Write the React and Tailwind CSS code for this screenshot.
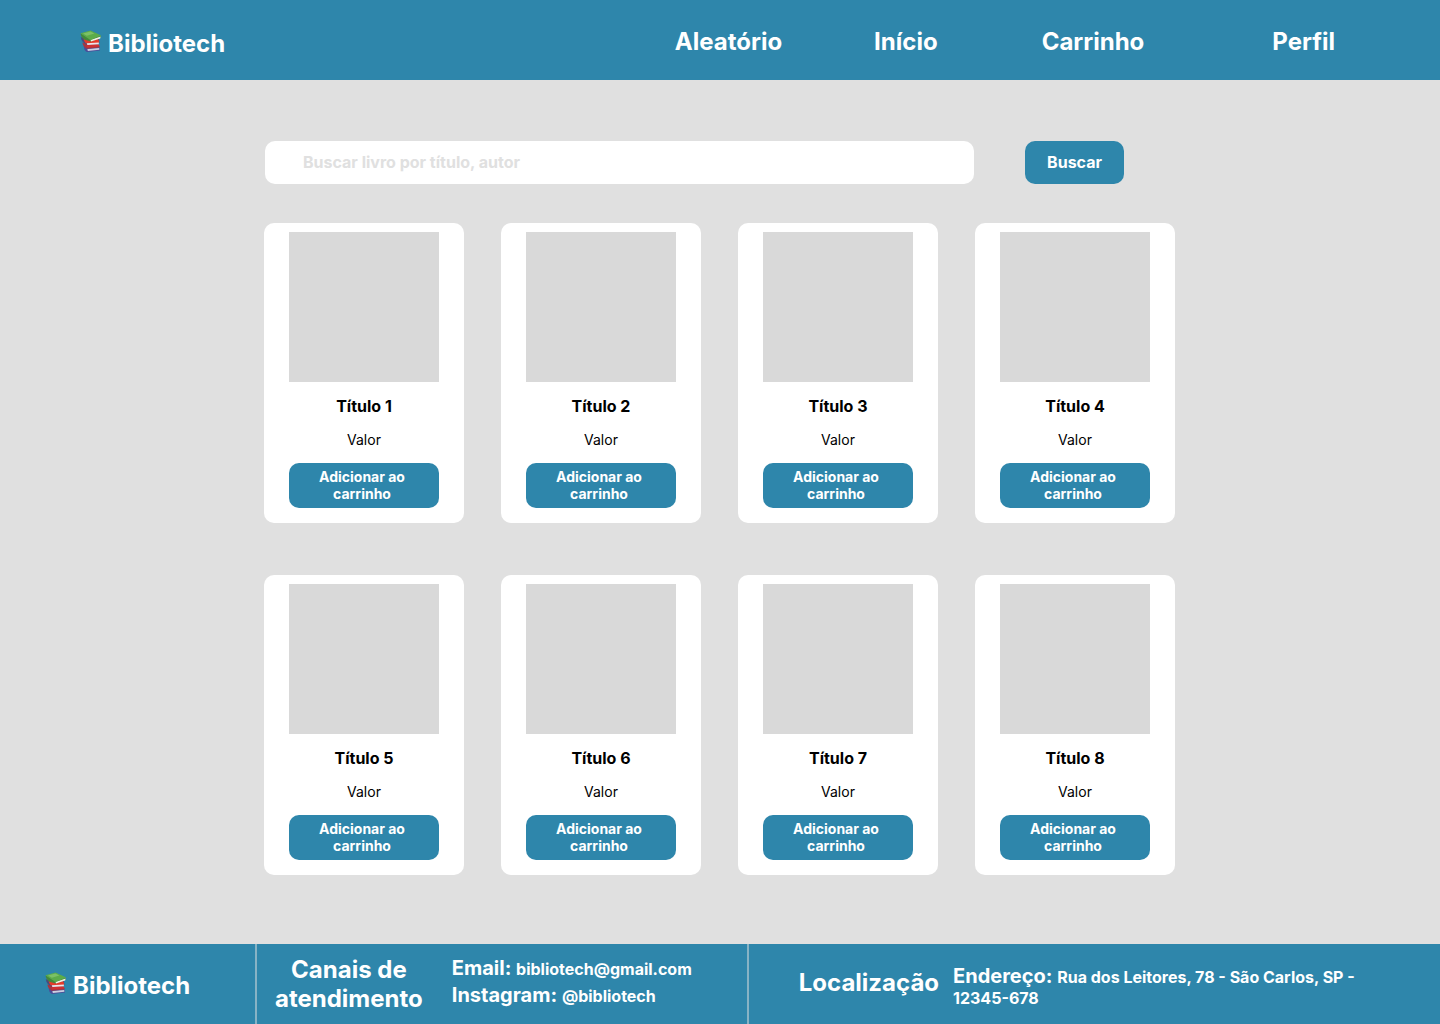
const books = [1, 2, 3, 4, 5, 6, 7, 8].map((n) => ({
  id: n,
  title: `Título ${n}`,
  price: "Valor",
}));

function BooksIcon() {
  return (
    <svg viewBox="0 0 22 22" className="size-[22px] shrink-0" aria-hidden="true">
      <path d="M3.6 16 8 16.4 19.6 17.4 20 20.6 7 22Q5.2 21.4 4.4 19.5Z" fill="#4a4c98" />
      <path d="M7.4 19 19.2 18 19.4 19.8 7.8 21Z" fill="#ccd0e0" />
      <path d="M2.4 12.4 4 13 17 14 19.6 16 19.4 17.4 6.8 18.8Q4.2 17.6 3 15Z" fill="#a83440" />
      <path d="M6.6 15.2 18.8 14.6 19.4 16.4 7 17.6Z" fill="#d03030" />
      <path d="M0.8 7 5 9 19 9 19.4 13 5.8 14.6Q2.6 12.8 1.4 9.8Z" fill="#484c7c" />
      <path d="M3.6 8.4 10 10.4 18 9 19.2 11.6 18.8 13 5.8 13.6Q3.8 11.6 3.6 8.4Z" fill="#e43a2a" />
      <path d="M6.8 13.2 18.8 12.4 18.8 14.2 7.4 15Z" fill="#ece4e8" />
      <path d="M0.6 3.4 10 8.6 21 5.8 20.6 7.8 10.8 11.6 4.6 9.8Q1 7.4 0.6 3.4Z" fill="#44883a" />
      <path d="M10.6 10 20.6 6.6 20.2 8.4 11 11.4Z" fill="#eef0e6" />
      <path d="M0.4 3.2 10.6 0.4 21.2 5.6 10.4 10Z" fill="#5cac4a" />
      <path d="M3 3.4 10.4 1.4 14.4 3.4 6.8 5.8Z" fill="#7cc066" />
    </svg>
  );
}

function Logo() {
  return (
    <a href="#inicio" className="flex items-center gap-1.5 pt-1 text-2xl font-bold">
      <span className="pb-1.5">
        <BooksIcon />
      </span>
      Bibliotech
    </a>
  );
}

function Header() {
  return (
    <header className="flex min-h-20 flex-wrap items-center justify-between bg-[#2e86ab] pr-[105px] pl-20 pt-1 text-white">
      <Logo />
      <nav className="flex flex-wrap items-center text-2xl font-bold">
        <a href="#aleatorio" className="mr-[92px]">Aleatório</a>
        <a href="#inicio" className="mr-[104px]">Início</a>
        <a href="#carrinho" className="mr-32">Carrinho</a>
        <a href="#perfil">Perfil</a>
      </nav>
    </header>
  );
}

function SearchForm() {
  return (
    <form className="flex gap-[51px] pr-[52px] pl-px" onSubmit={(e) => e.preventDefault()}>
      <input
        type="search"
        aria-label="Buscar livro"
        placeholder="Buscar livro por título, autor"
        className="h-[43px] min-w-0 flex-1 rounded-[10px] bg-white px-[38px] pb-px font-bold text-black placeholder:text-[#e0e0e0]"
      />
      <button type="submit" className="h-[43px] rounded-[10px] bg-[#2e86ab] px-[22px] pb-px font-bold text-white">
        Buscar
      </button>
    </form>
  );
}

function BookCard({ book }) {
  return (
    <article className="flex flex-col items-center rounded-[10px] bg-white px-[25px] pt-[9px] pb-[15px]">
      <div className="aspect-square w-full bg-[#d9d9d9]" />
      <h2 className="mt-3.5 text-base leading-5 font-bold">{book.title}</h2>
      <p className="mt-3.5 text-sm leading-5">{book.price}</p>
      <button
        type="button"
        className="mt-[13px] w-full rounded-[10px] bg-[#2e86ab] pt-[5px] pr-7 pb-1.5 pl-6 text-sm leading-[17px] font-bold text-white"
      >
        Adicionar ao carrinho
      </button>
    </article>
  );
}

function Footer() {
  return (
    <footer className="flex min-h-20 items-stretch bg-[#2e86ab] font-bold text-white">
      <div className="flex w-[255px] shrink-0 items-center pl-[45px]">
        <Logo />
      </div>
      <section className="flex shrink-0 items-center gap-[29px] border-x-2 border-[#e0e0e0]/50 pr-[55px] pl-[18px]">
        <h2 className="text-center text-2xl leading-[29px]">
          Canais de
          <br />
          atendimento
        </h2>
        <address className="pb-1 text-xl leading-[26px] not-italic">
          <p>
            Email: <a href="mailto:bibliotech@gmail.com" className="text-base leading-[26px]">bibliotech@gmail.com</a>
          </p>
          <p>
            Instagram: <a href="#instagram" className="text-base leading-[26px]">@bibliotech</a>
          </p>
        </address>
      </section>
      <section className="flex flex-1 items-center gap-3.5 pr-20 pl-[50px]">
        <h2 className="pb-0.5 text-2xl">Localização</h2>
        <address className="pt-1.5 text-xl leading-5 not-italic">
          Endereço: <span className="text-base leading-5">Rua dos Leitores, 78 - São Carlos, SP - 12345-678</span>
        </address>
      </section>
    </footer>
  );
}

export default function App() {
  return (
    <div className="flex min-h-screen flex-col bg-[#e0e0e0] font-['Inter',sans-serif] text-black">
      <Header />
      <main className="mx-auto w-full max-w-[912px] flex-1 pt-[61px] pb-[69px]">
        <SearchForm />
        <div className="mt-[39px] grid grid-cols-[repeat(auto-fill,200px)] gap-x-[37px] gap-y-[52px]">
          {books.map((book) => (
            <BookCard key={book.id} book={book} />
          ))}
        </div>
      </main>
      <Footer />
    </div>
  );
}
